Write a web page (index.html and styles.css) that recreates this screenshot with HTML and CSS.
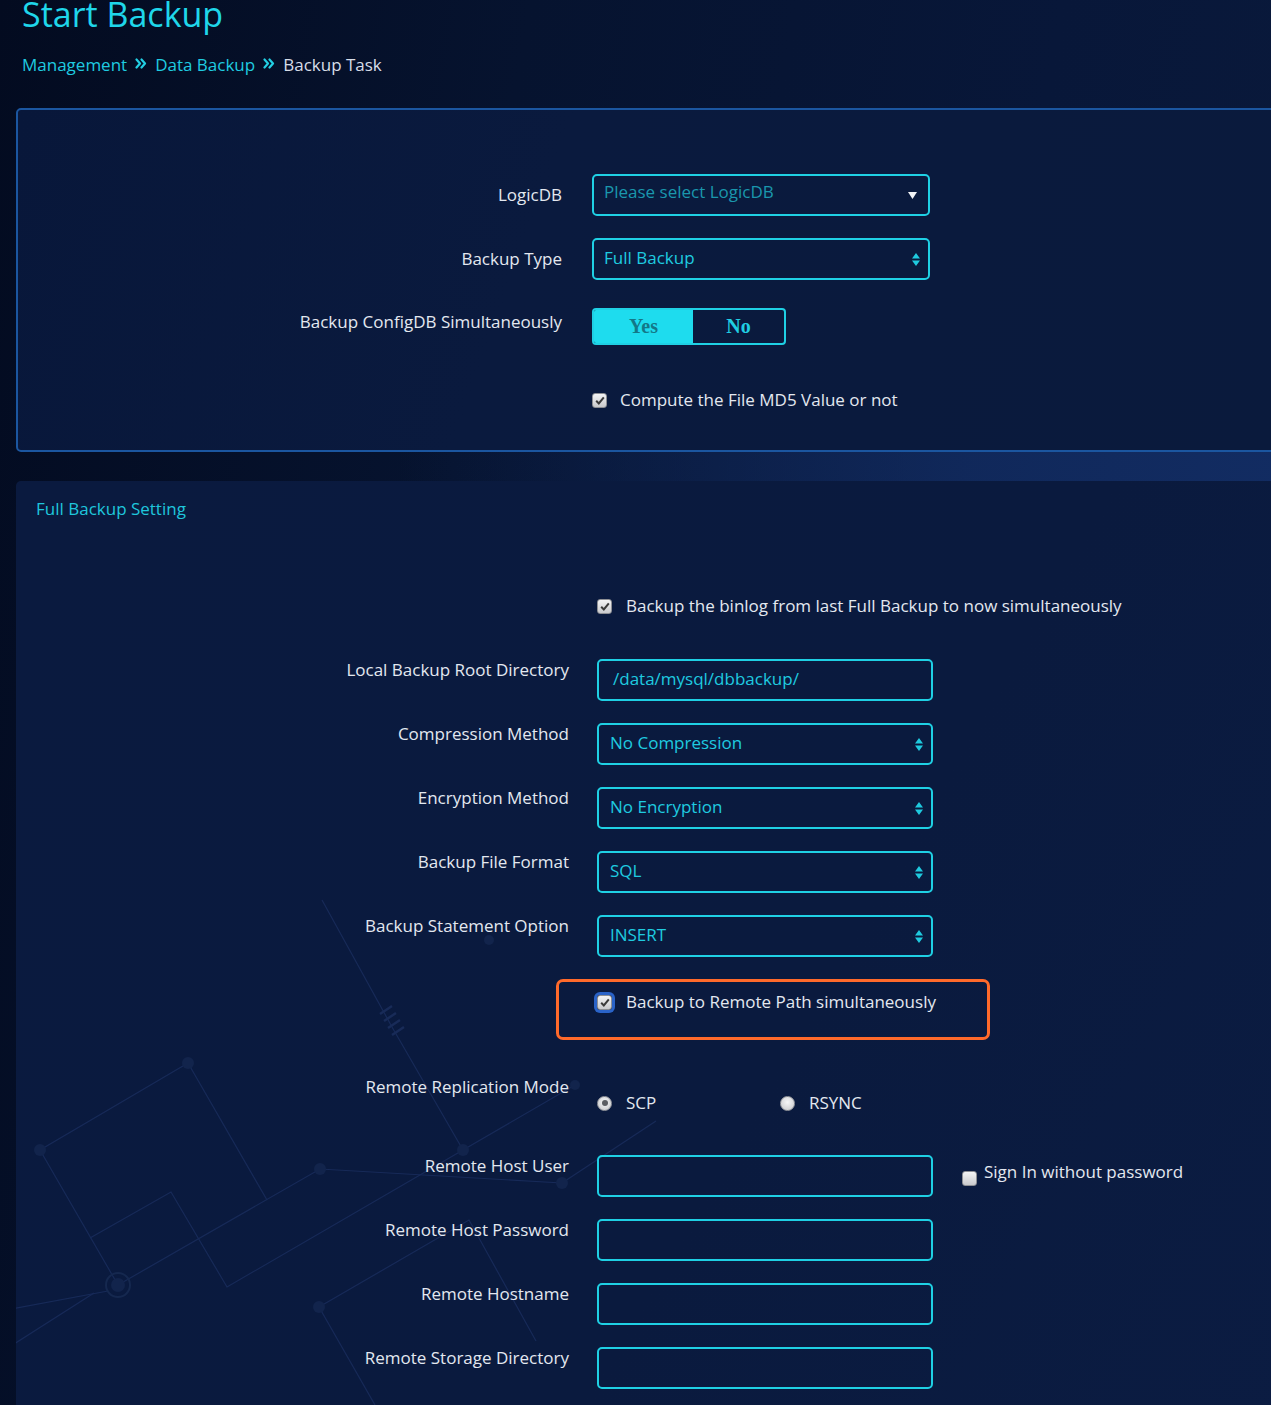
FILE: index.html
```html
<!DOCTYPE html>
<html lang="en">
<head>
<meta charset="utf-8">
<title>Start Backup</title>
<link rel="stylesheet" href="styles.css">
</head>
<body>
<div class="page">
  <h1 class="title">Start Backup</h1>
  <nav class="crumbs">
    <a class="crumb-link">Management</a>
    <svg class="sep" width="12" height="11" viewBox="0 0 12 11"><path d="M1.5 1.5 L5 5.5 L1.5 9.5 M6.5 1.5 L10 5.5 L6.5 9.5" fill="none" stroke="#22cfe3" stroke-width="2.2" stroke-linecap="round" stroke-linejoin="round"/></svg>
    <a class="crumb-link">Data Backup</a>
    <svg class="sep" width="12" height="11" viewBox="0 0 12 11"><path d="M1.5 1.5 L5 5.5 L1.5 9.5 M6.5 1.5 L10 5.5 L6.5 9.5" fill="none" stroke="#22cfe3" stroke-width="2.2" stroke-linecap="round" stroke-linejoin="round"/></svg>
    <span class="crumb-current">Backup Task</span>
  </nav>

  <section class="panel panel-main">
    <div class="row row-center">
      <div class="label label-main">LogicDB</div>
      <div class="field field-main placeholder">
        <span class="field-text">Please select LogicDB</span>
        <svg class="caret" width="9" height="7" viewBox="0 0 9 7"><path d="M0 0 H9 L4.5 7 Z" fill="#f1f3f6"/></svg>
      </div>
    </div>
    <div class="row row-center row-gap">
      <div class="label label-main">Backup Type</div>
      <div class="field field-main select">
        <span class="field-text">Full Backup</span>
        <svg class="updown" width="8" height="13" viewBox="0 0 8 13"><path d="M0 5.5 L4 0 L8 5.5 Z M0 7.5 H8 L4 13 Z" fill="#1fc9de"/></svg>
      </div>
    </div>
    <div class="row row-toggle">
      <div class="label label-main label-toggle">Backup ConfigDB Simultaneously</div>
      <div class="toggle">
        <span class="toggle-opt toggle-on">Yes</span>
        <span class="toggle-opt toggle-off">No</span>
      </div>
    </div>
    <div class="row row-md5">
      <div class="label label-main"></div>
      <div class="check-line check-line-main">
        <span class="checkbox"><svg width="10" height="9" viewBox="0 0 10 9"><path d="M1.2 4.8 L3.8 7.4 L8.8 1.4" fill="none" stroke="#3a3a3a" stroke-width="2"/></svg></span>
        <span class="check-text">Compute the File MD5 Value or not</span>
      </div>
    </div>
  </section>

  <div class="strip"></div>

  <section class="panel panel-full">
    <svg class="network" width="1260" height="930" viewBox="0 0 1260 930">
      <g fill="none" stroke="#172a58" stroke-width="1.2">
        <path d="M172 582 L24 669 L102 804 L304 688 L546 702"/>
        <path d="M172 582 L251 719"/>
        <path d="M74 757 L155 711 L211 806 L447 669 L559 604"/>
        <path d="M447 669 L376 546 L306 419"/>
        <path d="M-16 872 L78 812"/>
        <path d="M-16 830 L92 810"/>
        <path d="M303 826 L359 924"/>
        <path d="M303 826 L453 739 L520 860"/>
        <path d="M546 702 L640 640"/>
      </g>
      <g fill="#12244c">
        <circle cx="172" cy="582" r="6"/>
        <circle cx="24" cy="669" r="6"/>
        <circle cx="304" cy="688" r="6"/>
        <circle cx="447" cy="669" r="6"/>
        <circle cx="546" cy="702" r="6"/>
        <circle cx="303" cy="826" r="6"/>
        <circle cx="559" cy="604" r="5"/>
        <circle cx="473" cy="459" r="5"/>
      </g>
      <circle cx="102" cy="804" r="12" fill="none" stroke="#15284f" stroke-width="2"/>
      <circle cx="102" cy="804" r="7" fill="#12244c"/>
      <g stroke="#182b58" stroke-width="2.5">
        <path d="M364 533 L376 525 M368 540 L380 532 M372 547 L384 539 M376 554 L388 546"/>
      </g>
    </svg>

    <h2 class="panel-title">Full Backup Setting</h2>

    <div class="row row-binlog">
      <div class="label label-full"></div>
      <div class="check-line">
        <span class="checkbox"><svg width="10" height="9" viewBox="0 0 10 9"><path d="M1.2 4.8 L3.8 7.4 L8.8 1.4" fill="none" stroke="#3a3a3a" stroke-width="2"/></svg></span>
        <span class="check-text">Backup the binlog from last Full Backup to now simultaneously</span>
      </div>
    </div>

    <div class="row row-first">
      <div class="label label-full">Local Backup Root Directory</div>
      <div class="field field-full input"><span class="field-text">/data/mysql/dbbackup/</span></div>
    </div>
    <div class="row row-gap">
      <div class="label label-full">Compression Method</div>
      <div class="field field-full select">
        <span class="field-text">No Compression</span>
        <svg class="updown" width="8" height="13" viewBox="0 0 8 13"><path d="M0 5.5 L4 0 L8 5.5 Z M0 7.5 H8 L4 13 Z" fill="#1fc9de"/></svg>
      </div>
    </div>
    <div class="row row-gap">
      <div class="label label-full">Encryption Method</div>
      <div class="field field-full select">
        <span class="field-text">No Encryption</span>
        <svg class="updown" width="8" height="13" viewBox="0 0 8 13"><path d="M0 5.5 L4 0 L8 5.5 Z M0 7.5 H8 L4 13 Z" fill="#1fc9de"/></svg>
      </div>
    </div>
    <div class="row row-gap">
      <div class="label label-full">Backup File Format</div>
      <div class="field field-full select">
        <span class="field-text">SQL</span>
        <svg class="updown" width="8" height="13" viewBox="0 0 8 13"><path d="M0 5.5 L4 0 L8 5.5 Z M0 7.5 H8 L4 13 Z" fill="#1fc9de"/></svg>
      </div>
    </div>
    <div class="row row-gap">
      <div class="label label-full">Backup Statement Option</div>
      <div class="field field-full select">
        <span class="field-text">INSERT</span>
        <svg class="updown" width="8" height="13" viewBox="0 0 8 13"><path d="M0 5.5 L4 0 L8 5.5 Z M0 7.5 H8 L4 13 Z" fill="#1fc9de"/></svg>
      </div>
    </div>

    <div class="highlight">
      <div class="check-line">
        <span class="checkbox checkbox-focus"><svg width="10" height="9" viewBox="0 0 10 9"><path d="M1.2 4.8 L3.8 7.4 L8.8 1.4" fill="none" stroke="#3a3a3a" stroke-width="2"/></svg></span>
        <span class="check-text">Backup to Remote Path simultaneously</span>
      </div>
    </div>

    <div class="row row-mode">
      <div class="label label-full">Remote Replication Mode</div>
      <div class="radios">
        <div class="radio-item radio-item-first">
          <span class="radio radio-on"></span>
          <span class="check-text">SCP</span>
        </div>
        <div class="radio-item">
          <span class="radio"></span>
          <span class="check-text">RSYNC</span>
        </div>
      </div>
    </div>

    <div class="row row-user">
      <div class="label label-full">Remote Host User</div>
      <div class="field field-full input"></div>
      <div class="signin">
        <span class="checkbox checkbox-empty"></span>
        <span class="check-text">Sign In without password</span>
      </div>
    </div>
    <div class="row row-gap">
      <div class="label label-full">Remote Host Password</div>
      <div class="field field-full input"></div>
    </div>
    <div class="row row-gap">
      <div class="label label-full">Remote Hostname</div>
      <div class="field field-full input"></div>
    </div>
    <div class="row row-gap">
      <div class="label label-full">Remote Storage Directory</div>
      <div class="field field-full input"></div>
    </div>
  </section>
</div>
</body>
</html>
```

FILE: styles.css
```css
* { box-sizing: border-box; }

html, body {
  margin: 0;
  padding: 0;
}

body {
  width: 1271px;
  height: 1405px;
  overflow: hidden;
  font-family: "Open Sans", "Noto Sans", sans-serif;
  font-size: 17px;
  color: #e2e7ef;
  background:
    radial-gradient(ellipse 700px 900px at 1250px 850px, rgba(22, 44, 92, 0.35), rgba(22, 44, 92, 0) 70%),
    linear-gradient(100deg, #030b20 0%, #06132f 35%, #081739 70%, #0a1a3c 100%);
}

.page {
  padding-left: 16px;
  position: relative;
}

.title {
  margin: -6px 0 0 6px;
  font-size: 34px;
  line-height: 40px;
  font-weight: 400;
  color: #1fd6ea;
}

.crumbs {
  margin: 19px 0 0 6px;
  display: flex;
  align-items: center;
  height: 24px;
  line-height: 24px;
  font-size: 17px;
}

.crumb-link {
  color: #1fcbe0;
}

.crumb-current {
  color: #d7dde8;
}

.sep {
  margin: -3px 8px 0 8px;
}

.panel {
  margin-right: -20px;
  border-radius: 5px;
}

.panel-main {
  margin-top: 31px;
  border: 2px solid #1b56a0;
  background: linear-gradient(110deg, #08173a 0%, #0a1a3e 40%, #0a1a3c 100%);
  padding: 64px 0 39px 0;
}

.strip {
  height: 29px;
  margin-right: -20px;
  background: linear-gradient(90deg, rgba(16, 40, 90, 0) 0%, rgba(16, 40, 90, 0) 30%, rgba(17, 42, 94, 0.9) 75%, #122c62 100%);
}

.panel-full {
  position: relative;
  height: 960px;
  background: linear-gradient(120deg, #0a1a3f 0%, #0a1a3e 60%, #0b1c42 100%);
  padding-top: 17px;
  overflow: hidden;
}

.network {
  position: absolute;
  left: 0;
  top: 0;
  pointer-events: none;
}

.panel-title {
  position: relative;
  margin: 0 0 0 20px;
  font-size: 17px;
  line-height: 22px;
  font-weight: 400;
  color: #1fc6dc;
}

.row {
  position: relative;
  display: flex;
  align-items: flex-start;
}

.row-center {
  align-items: center;
}

.row-gap {
  margin-top: 22px;
}

.label {
  flex: none;
  text-align: right;
  line-height: 22px;
  color: #e3e8f0;
  white-space: nowrap;
}

.label-main {
  width: 544px;
  margin-right: 30px;
}

.label-full {
  width: 553px;
  margin-right: 28px;
}

.field {
  flex: none;
  height: 42px;
  border: 2px solid #1fd0e4;
  border-radius: 5px;
  display: flex;
  align-items: center;
  justify-content: space-between;
  color: #1fcbe0;
  font-size: 17px;
  padding-bottom: 3px;
}

.field-main {
  width: 338px;
  padding-left: 10px;
  padding-right: 8px;
}

.field-full {
  width: 336px;
  padding-left: 11px;
  padding-right: 8px;
}

.field-full.input {
  padding-left: 14px;
}

.updown {
  flex: none;
  margin-top: 3px;
}

.placeholder {
  color: #1a97ad;
  padding-bottom: 8px;
  padding-right: 11px;
}

.caret {
  margin-top: 8px;
}

.row-toggle {
  margin-top: 28px;
}

.label-toggle {
  padding-top: 3px;
}

.toggle {
  display: flex;
  width: 194px;
  height: 37px;
  border: 2px solid #1fd0e4;
  border-radius: 4px;
  overflow: hidden;
  font-family: "Liberation Serif", "DejaVu Serif", serif;
  font-weight: 700;
  font-size: 20px;
}

.toggle-opt {
  display: flex;
  align-items: center;
  justify-content: center;
}

.toggle-on {
  width: 99px;
  background: #1edcee;
  color: #137888;
}

.toggle-off {
  flex: 1;
  color: #20cde2;
}

.row-md5 {
  margin-top: 44px;
}

.check-line {
  display: flex;
  align-items: center;
  line-height: 22px;
}

.check-text {
  color: #e3e8f0;
  white-space: nowrap;
}

.checkbox {
  flex: none;
  width: 15px;
  height: 15px;
  margin-right: 14px;
  border-radius: 3px;
  border: 1px solid #8d8f94;
  background: linear-gradient(#f4f4f5, #c9cacd);
  display: flex;
  align-items: center;
  justify-content: center;
}

.check-line-main .checkbox {
  margin-right: 13px;
}

.checkbox-focus {
  box-shadow: 0 0 0 3px #2a63c8;
}

.row-binlog {
  margin-top: 75px;
}

.row-first {
  margin-top: 42px;
}

.highlight {
  position: relative;
  margin: 22px 0 0 540px;
  width: 434px;
  height: 61px;
  border: 3px solid #ff6a2b;
  border-radius: 7px;
  padding: 9px 0 0 38px;
}

.row-mode {
  margin-top: 36px;
}

.radios {
  display: flex;
  padding-top: 16px;
}

.radio-item {
  display: flex;
  align-items: center;
  line-height: 22px;
}

.radio-item-first {
  width: 183px;
}

.radio {
  flex: none;
  width: 15px;
  height: 15px;
  margin-right: 14px;
  border-radius: 50%;
  border: 1px solid #9a9ca1;
  background: radial-gradient(circle at 50% 40%, #f6f6f7, #c6c7ca);
  display: flex;
  align-items: center;
  justify-content: center;
}

.radio-on::after {
  content: "";
  width: 6px;
  height: 6px;
  border-radius: 50%;
  background: #5b5d62;
}

.row-user {
  margin-top: 41px;
}

.signin {
  display: flex;
  align-items: flex-start;
  margin-left: 29px;
  padding-top: 6px;
  line-height: 22px;
}

.signin .checkbox {
  margin-top: 10px;
  margin-right: 7px;
}
```
